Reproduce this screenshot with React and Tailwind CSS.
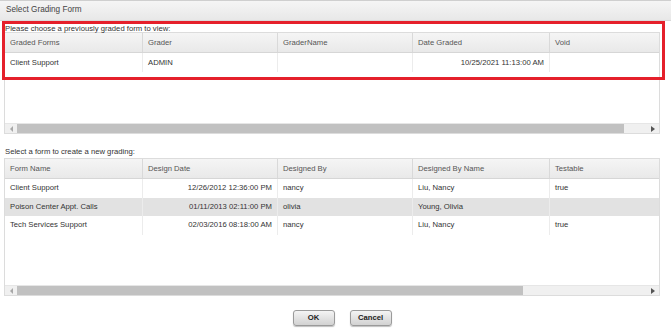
const gradedCols = ['Graded Forms', 'Grader', 'GraderName', 'Date Graded', 'Void']
const gradedRows = [
  { cells: ['Client Support', 'ADMIN', '', '10/25/2021 11:13:00 AM', ''] },
]

const formCols = ['Form Name', 'Design Date', 'Designed By', 'Designed By Name', 'Testable']
const formRows = [
  { cells: ['Client Support', '12/26/2012 12:36:00 PM', 'nancy', 'Liu, Nancy', 'true'] },
  { cells: ['Poison Center Appt. Calls', '01/11/2013 02:11:00 PM', 'olivia', 'Young, Olivia', ''], selected: true },
  { cells: ['Tech Services Support', '02/03/2016 08:18:00 AM', 'nancy', 'Liu, Nancy', 'true'] },
]

const colsClass = 'grid grid-cols-[138px_135px_135px_137px_1fr]'

function ScrollBar({ thumb }) {
  return (
    <div className="flex items-center h-[10px] bg-[#f0f0f0] border-t border-[#e6e6e6]">
      <div className="w-[12px] flex justify-center">
        <div className="w-0 h-0 border-y-[3px] border-y-transparent border-r-[3px] border-r-[#a8a8a8]" />
      </div>
      <div className="h-full bg-[#c1c1c1]" style={{ width: thumb }} />
      <div className="flex-1" />
      <div className="w-[12px] flex justify-center">
        <div className="w-0 h-0 border-y-[3px] border-y-transparent border-l-[4px] border-l-[#555]" />
      </div>
    </div>
  )
}

function DataGrid({ cols, rows, rightCol, height, headerH, rowH, thumb }) {
  return (
    <div className="ml-[4px] w-[656px] border border-[#dcdcdc] flex flex-col bg-white" style={{ height }}>
      <div
        className={`${colsClass} bg-gradient-to-b from-[#f5f5f5] to-[#e9e9e9] border-b border-[#d6d6d6] text-[#555]`}
        style={{ height: headerH }}
      >
        {cols.map((c, i) => (
          <div
            key={c}
            className={`px-[5px] flex items-center ${i < cols.length - 1 ? 'border-r border-[#d9d9d9]' : ''}`}
          >
            {c}
          </div>
        ))}
      </div>
      {rows.map((r, ri) => (
        <div
          key={ri}
          className={`${colsClass} ${r.selected ? 'bg-[#e2e2e2]' : ''} text-[#333]`}
          style={{ height: rowH }}
        >
          {r.cells.map((c, i) => (
            <div
              key={i}
              className={`px-[5px] flex items-center ${i === rightCol ? 'justify-end' : ''} ${
                i < r.cells.length - 1 ? 'border-r border-[#ececec]' : ''
              }`}
            >
              {c}
            </div>
          ))}
        </div>
      ))}
      <div className="flex-1" />
      <ScrollBar thumb={thumb} />
    </div>
  )
}

function Button({ children }) {
  return (
    <button
      type="button"
      className="w-[42px] h-[16px] rounded-[3px] border border-[#9a9a9a] bg-gradient-to-b from-[#f4f4f4] to-[#d2d2d2] shadow-[0_1px_1px_rgba(0,0,0,0.25)] text-[7.7px] font-bold text-[#222] leading-none"
    >
      {children}
    </button>
  )
}

export default function App() {
  return (
    <div
      className="relative w-[671px] h-[330px] bg-white text-[7.7px] leading-none overflow-hidden"
      style={{ fontFamily: '"Liberation Sans", Arial, sans-serif' }}
    >
      <div className="h-[21px] border-t border-[#cfcfcf] border-b border-b-[#dadada] bg-gradient-to-b from-[#f5f5f5] to-[#e8e8e8] flex items-center pl-[6px] text-[8.2px] text-[#444]">
        Select Grading Form
      </div>

      <div className="pl-[1px] pt-[4px] h-[11px] text-[#333] ml-[4px]">
        Please choose a previously graded form to view:
      </div>
      <DataGrid
        cols={gradedCols}
        rows={gradedRows}
        rightCol={3}
        height={102}
        headerH={20}
        rowH={19}
        thumb={607}
      />

      <div className="mt-[12px] pt-[2px] ml-[5px] h-[12px] text-[#333]">Select a form to create a new grading:</div>
      <DataGrid
        cols={formCols}
        rows={formRows}
        rightCol={1}
        height={138}
        headerH={20}
        rowH={18.5}
        thumb={506}
      />

      <div className="mt-[14px] flex justify-center gap-[15px] pl-[13px]">
        <Button>OK</Button>
        <Button>Cancel</Button>
      </div>

      <div className="absolute left-[2px] top-[21px] w-[663px] h-[59px] border-[3px] border-[#e5202b] pointer-events-none" />
    </div>
  )
}
